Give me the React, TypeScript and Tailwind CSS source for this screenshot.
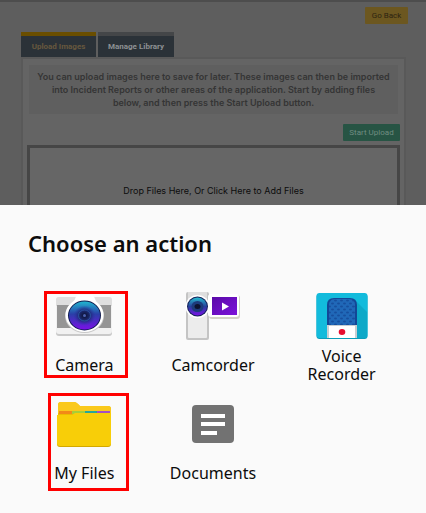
import type { ReactNode } from "react";

function CameraIcon() {
  return (
    <svg width="58" height="42" viewBox="0 0 58 42" aria-hidden="true">
      <defs>
        <linearGradient id="cameraLens" x1="0" y1="0" x2="0" y2="1">
          <stop offset="0" stopColor="#21b6cf" />
          <stop offset="0.45" stopColor="#2a3fa8" />
          <stop offset="1" stopColor="#7a10e8" />
        </linearGradient>
        <radialGradient id="cameraCore">
          <stop offset="0" stopColor="#0b0f2c" />
          <stop offset="0.5" stopColor="#1c2a72" />
          <stop offset="1" stopColor="#2b2fa0" stopOpacity="0" />
        </radialGradient>
      </defs>
      <rect x="1" y="3" width="56" height="38" rx="3" fill="#c9c9c9" />
      <rect x="1" y="2" width="56" height="37" rx="3" fill="#f1f1f1" />
      <path d="M1 11V5a3 3 0 0 1 3-3h50a3 3 0 0 1 3 3v6z" fill="#dedede" />
      <rect x="2" y="10" width="54" height="23" fill="#959595" />
      <path d="M20 4c1-3 2-4 4-4h12c2 0 3 1 4 4l4 8H16z" fill="#fff" />
      <ellipse cx="29.500" cy="21" rx="19.500" ry="17" fill="#c8c8c8" />
      <ellipse cx="29.500" cy="20" rx="19" ry="17" fill="#fff" />
      <ellipse cx="29.500" cy="20.500" rx="16.500" ry="15" fill="#101c50" />
      <ellipse cx="29.500" cy="20.500" rx="15.500" ry="14" fill="url(#cameraLens)" />
      <ellipse cx="29.500" cy="20.500" rx="11" ry="10" fill="url(#cameraCore)" />
      <ellipse cx="29.500" cy="20.500" rx="6" ry="5.500" fill="none" stroke="#2c5ca8" strokeWidth="0.8" />
      <circle cx="29.500" cy="20.500" r="1.500" fill="#4b62b0" />
    </svg>
  );
}

function CamcorderIcon() {
  return (
    <svg width="56" height="50" viewBox="0 0 56 50" aria-hidden="true">
      <defs>
        <linearGradient id="camcorderLens" x1="0" y1="0" x2="0" y2="1">
          <stop offset="0" stopColor="#27bccf" />
          <stop offset="0.5" stopColor="#26419c" />
          <stop offset="1" stopColor="#7a10e8" />
        </linearGradient>
        <linearGradient id="camcorderScreen" x1="0" y1="0" x2="1" y2="1">
          <stop offset="0" stopColor="#5a0aa8" />
          <stop offset="1" stopColor="#7c14da" />
        </linearGradient>
      </defs>
      <rect x="1" y="1" width="23" height="48" rx="2" fill="#c4c4c4" />
      <rect x="3" y="1" width="19" height="46" rx="1" fill="#ececec" />
      <rect x="3" y="1" width="19" height="12" fill="#dedede" />
      <rect x="24" y="4" width="31" height="24" rx="3" fill="#d2d2c6" />
      <rect x="23" y="3" width="31" height="23" rx="3" fill="#fff" />
      <rect x="27" y="6" width="25" height="18" fill="url(#camcorderScreen)" />
      <path d="M37 11.500v8l7-4z" fill="#fff" />
      <ellipse cx="12.500" cy="15.500" rx="12" ry="11.500" fill="#fff" />
      <ellipse cx="12.500" cy="15.500" rx="10.500" ry="10" fill="#15215a" />
      <ellipse cx="12.500" cy="15.500" rx="9.500" ry="9" fill="url(#camcorderLens)" />
      <ellipse cx="12.500" cy="15.500" rx="6" ry="5.500" fill="#1d3b7c" />
      <ellipse cx="12.500" cy="15.500" rx="3" ry="2.500" fill="#0c1330" />
    </svg>
  );
}

function VoiceRecorderIcon() {
  return (
    <svg width="52" height="46" viewBox="0 0 52 46" aria-hidden="true">
      <defs>
        <pattern id="micMesh" width="6" height="6" patternUnits="userSpaceOnUse">
          <rect width="6" height="6" fill="#2068b8" />
          <ellipse cx="1.500" cy="1.500" rx="1.500" ry="1" fill="#164f9e" />
          <ellipse cx="4.500" cy="4.500" rx="1.500" ry="1" fill="#164f9e" />
        </pattern>
      </defs>
      <rect x="0.500" y="1" width="51" height="45" rx="3" fill="#0c9db9" />
      <rect x="0.500" y="0" width="51" height="45" rx="3" fill="#12bbdc" />
      <path d="M41 9l10 10v26H41z" fill="#0da9c8" />
      <path d="M11 33V12q0-7 7-7h16q7 0 7 7v21z" fill="#134796" />
      <path d="M13 33V12q0-6 6-6h14q6 0 6 6v21z" fill="url(#micMesh)" />
      <rect x="11" y="32" width="30" height="13" fill="#c7ced2" />
      <rect x="13" y="33" width="26" height="12" fill="#fff" />
      <ellipse cx="26" cy="39" rx="3.300" ry="3" fill="#e80c2e" />
    </svg>
  );
}

function FolderIcon() {
  return (
    <svg width="56" height="46" viewBox="0 0 56 46" aria-hidden="true">
      <path d="M2 13V4q0-3 3-3h13q2 0 4 2l2 2h28q3 0 3 3v8H2z" fill="#edbb00" />
      <path d="M2 12V4q0-3 3-3h13q2 0 4 2l2 2h28q3 0 3 3v4z" fill="#fac91c" />
      <rect x="3" y="10" width="13" height="3" fill="#f28a18" />
      <rect x="16" y="10" width="13" height="3" fill="#a6ce39" />
      <rect x="29" y="10" width="12" height="3" fill="#27a69a" />
      <rect x="41" y="10" width="13" height="3" fill="#a34fc4" />
      <path d="M1 14h15l3-1h36v30q0 3-3 3H4q-3 0-3-3z" fill="#d3a800" />
      <path d="M1 14h15l3-2h36v30q0 3-3 3H4q-3 0-3-3z" fill="#f8ce08" />
    </svg>
  );
}

function DocumentIcon() {
  return (
    <svg width="44" height="40" viewBox="0 0 44 40" aria-hidden="true">
      <rect x="1" y="1" width="42" height="38" rx="4" fill="#727272" />
      <path d="M10 10h24v4H10zM10 18h24v4H10zM10 27h16v4H10z" fill="#fff" />
    </svg>
  );
}

function Action({ icon, label }: { icon: ReactNode; label: ReactNode }) {
  return (
    <button type="button" className="flex flex-col items-center gap-[3px]">
      <span className="flex h-14 items-center justify-center">{icon}</span>
      <span className="flex h-9 items-center text-center text-[16px] leading-[18px]">{label}</span>
    </button>
  );
}

export default function App() {
  return (
    <div className="flex min-h-screen flex-col bg-[#5e5e5e]">
      <main className="flex h-[205px] flex-col overflow-hidden border-t-2 border-[#4d4d4d] font-['Roboto',sans-serif]">
        <div className="flex justify-end pt-[5px] pr-[18px]">
          <button type="button" className="h-[17px] w-[43px] rounded-[1px] bg-[#6c5720] text-[8px] leading-[16px] text-[#2d2410]">
            Go Back
          </button>
        </div>
        <div className="mt-2 mr-5 ml-[21px] flex flex-1 flex-col">
          <div className="flex gap-[2px] text-[8px] font-bold">
            <button type="button" className="h-[25px] w-[75px] border-t-4 border-[#6a4e00] bg-[#2b3238] text-[#67583e]">
              Upload Images
            </button>
            <button type="button" className="h-[25px] w-[76px] border-t-4 border-[#444648] bg-[#2b3238] text-[#8d9093]">
              Manage Library
            </button>
          </div>
          <section className="flex flex-1 flex-col border-2 border-b-0 border-[#595959] bg-[#646464] px-1 pt-1.5">
            <p className="mx-0.5 bg-[#5f5f5f] px-2 pt-[5px] pb-[5px] text-center font-['Inter',sans-serif] text-[9px] leading-[13px] font-semibold text-[#353535]">
              You can upload images here to save for later. These images can then be imported into Incident Reports or other areas of the application. Start by adding files below, and then press the Start Upload button.
            </p>
            <div className="mt-2.5 mb-1 flex justify-end">
              <button type="button" className="h-[17px] w-[57px] rounded-[1px] bg-[#275444] text-[8px] leading-[16px] text-[#718d82]">
                Start Upload
              </button>
            </div>
            <button type="button" className="flex-1 border-[3px] border-b-0 border-[#464646] bg-[#666666] pt-7 font-['Inter',sans-serif] text-[9px] text-[#0c0c0c]">
              Drop Files Here, Or Click Here to Add Files
            </button>
          </section>
        </div>
      </main>
      <section className="flex-1 bg-[#fafafa] px-5 pt-6 pb-4 font-['Noto_Sans',sans-serif] text-[#0c0c0c]">
        <h1 className="mb-[31px] ml-2 text-[22px] leading-[28px] font-semibold">Choose an action</h1>
        <div className="grid grid-cols-3 gap-y-[13px]">
          <div className="relative flex justify-center">
            <Action icon={<CameraIcon />} label="Camera" />
            <span className="pointer-events-none absolute top-[3px] left-6 h-[87px] w-[84px] border-3 border-[#ff0000]" />
          </div>
          <Action icon={<CamcorderIcon />} label="Camcorder" />
          <Action icon={<VoiceRecorderIcon />} label={<>Voice<br />Recorder</>} />
          <div className="relative flex justify-center">
            <Action icon={<FolderIcon />} label="My Files" />
            <span className="pointer-events-none absolute -top-[3px] left-7 h-[98px] w-[81px] border-3 border-[#ff0000]" />
          </div>
          <Action icon={<DocumentIcon />} label="Documents" />
        </div>
      </section>
    </div>
  );
}
